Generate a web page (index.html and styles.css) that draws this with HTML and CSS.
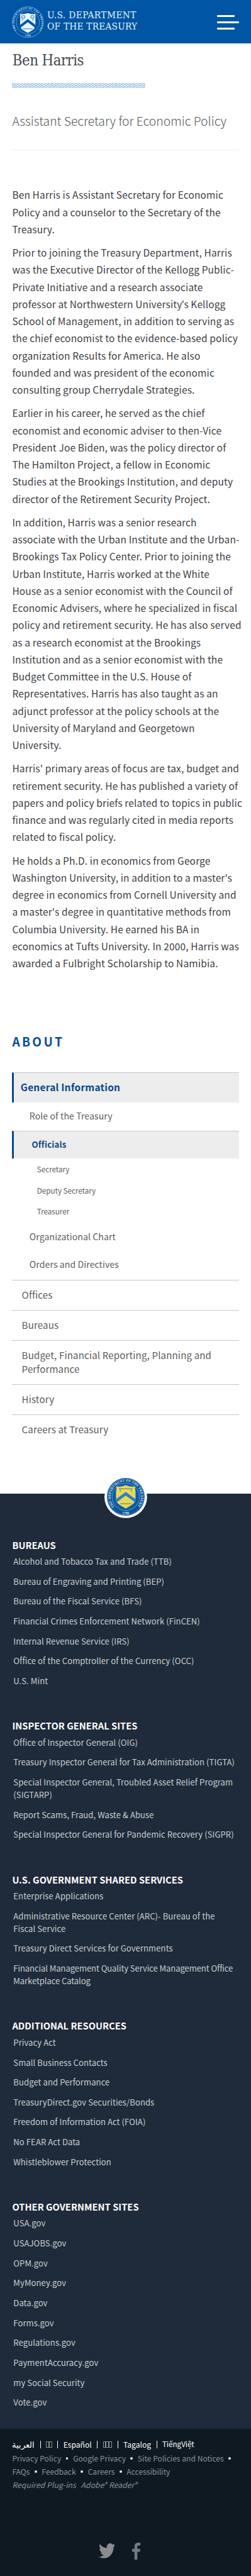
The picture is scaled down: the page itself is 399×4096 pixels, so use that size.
FILE: index.html
```html
<!DOCTYPE html>
<html lang="en">
<head>
<meta charset="utf-8">
<title>Ben Harris | U.S. Department of the Treasury</title>
<link rel="stylesheet" href="styles.css">
</head>
<body>
<header class="site-header">
  <div class="brand">
    <svg class="brand-seal" viewBox="0 0 52 52" fill="none">
      <defs><path id="ring" d="M7.4 38.5A22.3 22.3 0 1 1 44.6 38.5" transform="translate(0 .8)"/></defs>
      <circle cx="26" cy="26" r="25.2" stroke="#9cc8ee" stroke-width=".7"/>
      <circle cx="26" cy="26" r="19" stroke="#9cc8ee" stroke-width=".6"/>
      <text class="ring-text" fill="#d9edfb"><textPath href="#ring" textLength="96">THE DEPARTMENT OF THE TREASURY</textPath></text>
      <text class="ring-year" x="26" y="49.6" text-anchor="middle" fill="#d9edfb">1789</text>
      <path d="M13.5 12.5q6 1 12.5-1.500q6.500 2.500 12.500 1.500v18c0 7-5 9-12.500 13c-7.500-4-12.500-6-12.500-13z" fill="#e6f5fc"/>
      <path d="M13.500 30.500L26 21l12.500 9.500v5L26 26l-12.500 9.500z" fill="#0056a6"/>
      <path d="M16 15.500h5v4h-5zm15 0h5v4h-5zM17.500 20v4m17-4v4M18 37h16" stroke="#0056a6" stroke-width=".8"/>
    </svg>
    <div class="brand-name">
      <span class="brand-l1">U.S. DEPARTMENT</span>
      <span class="brand-l2">OF THE TREASURY</span>
    </div>
  </div>
  <div class="menu"><span></span><span class="menu-long"></span><span></span></div>
</header>

<main class="profile">
  <h1 class="name"><span>Ben Harris</span></h1>
  <div class="stripes"></div>
  <h2 class="role"><span>Assistant Secretary for Economic Policy</span></h2>
  <div class="bio">
    <p>Ben Harris is Assistant Secretary for Economic<br>Policy and a counselor to the Secretary of the<br>Treasury.</p>
    <p>Prior to joining the Treasury Department, Harris<br>was the Executive Director of the Kellogg Public-<br>Private Initiative and a research associate<br>professor at Northwestern University<span class="apos">’</span>s Kellogg<br>School of Management, in addition to serving as<br>the chief economist to the evidence-based policy<br>organization Results for America. He also<br>founded and was president of the economic<br>consulting group Cherrydale Strategies.</p>
    <p>Earlier in his career, he served as the chief<br>economist and economic adviser to then-Vice<br>President Joe Biden, was the policy director of<br>The Hamilton Project, a fellow in Economic<br>Studies at the Brookings Institution, and deputy<br>director of the Retirement Security Project.</p>
    <p>In addition, Harris was a senior research<br>associate with the Urban Institute and the Urban-<br>Brookings Tax Policy Center. Prior to joining the<br>Urban Institute, Harris worked at the White<br>House as a senior economist with the Council of<br>Economic Advisers, where he specialized in fiscal<br>policy and retirement security. He has also served<br>as a research economist at the Brookings<br>Institution and as a senior economist with the<br>Budget Committee in the U.S. House of<br>Representatives. Harris has also taught as an<br>adjunct professor at the policy schools at the<br>University of Maryland and Georgetown<br>University.</p>
    <p>Harris' primary areas of focus are tax, budget and<br>retirement security. He has published a variety of<br>papers and policy briefs related to topics in public<br>finance and was regularly cited in media reports<br>related to fiscal policy.</p>
    <p>He holds a Ph.D. in economics from George<br>Washington University, in addition to a master's<br>degree in economics from Cornell University and<br>a master's degree in quantitative methods from<br>Columbia University. He earned his BA in<br>economics at Tufts University. In 2000, Harris was<br>awarded a Fulbright Scholarship to Namibia.</p>
  </div>
</main>

<nav class="about">
  <h2 class="about-title">ABOUT</h2>
  <ul class="tree">
    <li class="top active"><span>General Information</span></li>
    <li class="sub first"><span>Role of the Treasury</span></li>
    <li class="sub active officials"><span>Officials</span></li>
    <li class="leaf"><span>Secretary</span></li>
    <li class="leaf"><span>Deputy Secretary</span></li>
    <li class="leaf"><span>Treasurer</span></li>
    <li class="sub"><span>Organizational Chart</span></li>
    <li class="sub last"><span>Orders and Directives</span></li>
    <li class="top"><span>Offices</span></li>
    <li class="top"><span>Bureaus</span></li>
    <li class="top"><span>Budget, Financial Reporting, Planning and<br>Performance</span></li>
    <li class="top"><span>History</span></li>
    <li class="top"><span>Careers at Treasury</span></li>
  </ul>
</nav>

<footer class="site-footer">
  <svg class="footer-seal" viewBox="0 0 70 70" fill="none">
    <defs><path id="ring2" d="M16.500 51.500A24.800 24.800 0 1 1 53.500 51.500"/></defs>
    <circle cx="35" cy="35" r="35" fill="#fff"/>
    <circle cx="35" cy="35" r="31" fill="#0f5596"/>
    <circle cx="35" cy="35" r="29.800" stroke="#8fbbe0" stroke-width=".5"/>
    <circle cx="35" cy="35" r="22.500" fill="#0b5ca8" stroke="#8fbbe0" stroke-width=".7"/>
    <text class="ring-text big" fill="#d5e8f5"><textPath href="#ring2" textLength="112">THE DEPARTMENT OF THE TREASURY</textPath></text>
    <text class="ring-year big" x="35" y="63.500" text-anchor="middle" fill="#d5e8f5">1789</text>
    <path d="M19.500 18q8 1.500 15.500-2q7.500 3.500 15.500 2q-1 4 .5 8v11c0 10-7 12-16 17.500c-9-5.500-16-7.500-16-17.500v-11q1.500-4 .5-8z" fill="#e8d85c"/>
    <path d="M19 39L35 27l16 12v6L35 33 19 45z" fill="#2f7fc4"/>
    <path d="M24 22h22M26 22v5m18-5v5M26 46.500h18" stroke="#7f9a70" stroke-width="1.500"/>
  </svg>
  <section><h3>BUREAUS</h3><ul><li>Alcohol and Tobacco Tax and Trade (TTB)</li><li>Bureau of Engraving and Printing (BEP)</li><li>Bureau of the Fiscal Service (BFS)</li><li>Financial Crimes Enforcement Network (FinCEN)</li><li>Internal Revenue Service (IRS)</li><li>Office of the Comptroller of the Currency (OCC)</li><li>U.S. Mint</li></ul></section>
  <section><h3>INSPECTOR GENERAL SITES</h3><ul><li>Office of Inspector General (OIG)</li><li>Treasury Inspector General for Tax Administration (TIGTA)</li><li>Special Inspector General, Troubled Asset Relief Program<br>(SIGTARP)</li><li>Report Scams, Fraud, Waste &amp; Abuse</li><li>Special Inspector General for Pandemic Recovery (SIGPR)</li></ul></section>
  <section><h3>U.S. GOVERNMENT SHARED SERVICES</h3><ul><li>Enterprise Applications</li><li>Administrative Resource Center (ARC)- Bureau of the<br>Fiscal Service</li><li>Treasury Direct Services for Governments</li><li class="tight">Financial Management Quality Service Management Office<br>Marketplace Catalog</li></ul></section>
  <section><h3>ADDITIONAL RESOURCES</h3><ul><li>Privacy Act</li><li>Small Business Contacts</li><li>Budget and Performance</li><li>TreasuryDirect.gov Securities/Bonds</li><li>Freedom of Information Act (FOIA)</li><li>No FEAR Act Data</li><li>Whistleblower Protection</li></ul></section>
  <section><h3>OTHER GOVERNMENT SITES</h3><ul><li>USA.gov</li><li>USAJOBS.gov</li><li>OPM.gov</li><li>MyMoney.gov</li><li>Data.gov</li><li>Forms.gov</li><li>Regulations.gov</li><li>PaymentAccuracy.gov</li><li>my Social Security</li><li>Vote.gov</li></ul></section>
</footer>

<div class="legal">
  <div class="langs"><span class="arabic">العربية</span><i></i><span class="boxes"><b></b><b></b></span><i></i><span>Español</span><i></i><span class="boxes"><b></b><b></b><b></b></span><i></i><span>Tagalog</span><i></i><span class="viet">TiếngViệt</span></div>
  <div class="links"><span>Privacy Policy</span><em></em><span>Google Privacy</span><em></em><span>Site Policies and Notices</span><em></em></div>
  <div class="links"><span>FAQs</span><em></em><span>Feedback</span><em></em><span>Careers</span><em></em><span>Accessibility</span></div>
  <div class="plugins"><span>Required Plug-ins</span><span>Adobe<sup>®</sup> Reader<sup>®</sup></span></div>
  <div class="social">
    <svg class="tw" viewBox="0 0 24 20" preserveAspectRatio="none"><path fill="#8c8c8c" d="M24 2.400a9.800 9.800 0 0 1-2.800.8A4.900 4.900 0 0 0 23.300.500a9.900 9.900 0 0 1-3.100 1.200 4.900 4.900 0 0 0-8.400 4.500A14 14 0 0 1 1.700 1a4.900 4.900 0 0 0 1.500 6.600 4.900 4.900 0 0 1-2.200-.6v.1a4.900 4.900 0 0 0 3.900 4.800 4.900 4.900 0 0 1-2.200.1 4.900 4.900 0 0 0 4.600 3.400A9.900 9.900 0 0 1 0 17.500a14 14 0 0 0 7.500 2.200c9.100 0 14.300-7.700 14-14.600A10 10 0 0 0 24 2.400z"/></svg>
    <svg class="fb" viewBox="0 0 14 28"><path fill="#717b81" d="M13.600.2v4.400H11c-2 0-2.400 1-2.400 2.400v3.100h4.900l-.6 4.900H8.600V28H3.900V15H0v-4.900h3.900V6.400C3.900 2.300 6.400 0 10.100 0c1.700 0 3.200.1 3.500.2z"/></svg>
  </div>
</div>
</body>
</html>
```

FILE: styles.css
```css
* { box-sizing: border-box; margin: 0; padding: 0; }
html { background: #fff; }
body {
  zoom: 0.9695;
  font-family: "Noto Sans CJK SC", "Noto Sans", sans-serif;
  color: #3f4245;
  white-space: nowrap;
  overflow-x: hidden;
}
ul { list-style: none; }

.site-header {
  height: 71px;
  background: #0055a4;
  display: flex;
  justify-content: space-between;
  padding: 10px 20px 0;
}
.brand { display: flex; gap: 5.500px; }
.brand-seal { width: 52px; height: 52px; }
.ring-text { font: bold 4.200px "Liberation Serif", serif; }
.ring-text.big { font-size: 5.600px; }
.ring-year { font: bold 4.500px "Liberation Serif", serif; }
.ring-year.big { font-size: 5.500px; }
.brand-name {
  display: flex;
  flex-direction: column;
  padding-top: 7px;
  font: 15.800px/18.400px "DejaVu Serif Condensed", "DejaVu Serif", serif;
  color: #e4f6fd;
}
.brand-l1 { letter-spacing: .42px; }
.brand-l2 { letter-spacing: .2px; }
.menu { width: 36px; display: flex; flex-direction: column; gap: 7px; padding-top: 15px; }
.menu span { width: 29px; height: 3px; border-radius: 1px; background: #fff; }
.menu .menu-long { width: 36px; }

.profile { padding: 0 20px; }
.name {
  padding: 11.700px 0 0 .5px;
  height: 65px;
  font: 300 24.500px/34px "DejaVu Serif Condensed", "DejaVu Serif", serif;
  color: #46484a;
  letter-spacing: -.55px;
}
.stripes {
  width: 218px;
  height: 8px;
  background: repeating-linear-gradient(147deg, #a3c5df 0 1.300px, #e0edf7 1.300px 3px);
}
.role {
  height: 103px;
  padding-top: 34.600px;
  border-bottom: 2px solid #eee;
  font-size: 20px;
  line-height: 40px;
  font-weight: 300;
  color: #55585b;
}
.bio {
  padding-top: 58.700px;
  font-size: 16px;
  line-height: 28.120px;
  letter-spacing: .14px;
}
.bio p { padding-bottom: 10.200px; }
.apos { font-family: "Noto Sans", sans-serif; line-height: 1; }

.about { padding: 83.900px 20px 0; height: 845.800px; }
.about-title {
  height: 71px;
  line-height: 40px;
  font-size: 19.800px;
  letter-spacing: 3.400px;
  color: #0b4a8f;
}
.tree li { color: #5c5e60; }
.top {
  border-top: 1px solid #c4c6c8;
  padding: 11.400px 0 13.900px 15.700px;
  font-size: 15.600px;
  line-height: 23px;
  letter-spacing: .13px;
}
.top.active {
  border-left: 4px solid #0d4a86;
  padding: 10.800px 0 14.200px 10.800px;
  font-size: 16px;
  letter-spacing: .2px;
}
.tree .active { background: #ededee; color: #0b4787; font-weight: 700; }
.sub { padding: 11.500px 0 11.500px 28.300px; font-size: 14.500px; line-height: 23px; letter-spacing: .1px; }
.sub.first { padding-top: 10.200px; padding-bottom: 13.100px; }
.sub.last { padding-bottom: 14.100px; }
.sub.officials {
  border-top: 1px solid #c4c6c8;
  border-left: 4px solid #0d4a86;
  padding: 10.300px 0 11.100px 29px;
  font-size: 13.500px;
  letter-spacing: .23px;
}
.leaf { padding: 5.900px 0 6.100px 40.700px; font-size: 12px; line-height: 23px; }

.site-footer {
  position: relative;
  height: 1533px;
  background: #1f2a3a;
  padding: 72.700px 20px 0;
  color: #c9ced4;
}
.footer-seal { position: absolute; width: 70px; height: 70px; left: 171px; top: -30px; }
.site-footer section { padding-bottom: 39.800px; }
.site-footer h3 { font-size: 15.200px; line-height: 22px; height: 28.300px; color: #fff; font-weight: 700; }
.site-footer li {
  padding: 0 0 11.970px 2px;
  font-size: 13.500px;
  line-height: 20.700px;
  letter-spacing: .07px;
}
.site-footer .tight { letter-spacing: -.1px; }

.legal {
  height: 242px;
  background: #0e1921;
  padding: 15.200px 20px 0;
  font-size: 12.500px;
  line-height: 22px;
  color: #8b9398;
}
.legal > div { display: flex; align-items: center; height: 22px; }
.langs { color: #fff; }
.arabic { font-size: 13.900px; }
.viet { font-size: 12px; }
.langs i { width: 1px; height: 13px; background: #fff; margin: 0 8.700px; }
.boxes { display: flex; }
.boxes b { width: 5px; height: 10px; border: 1px solid #8a9094; }
.links em { width: 4px; height: 4px; border-radius: 50%; background: #e6eaec; margin: 1px 8px 0 7.500px; }
.plugins { font-style: italic; gap: 8px; letter-spacing: .1px; }
.plugins sup { font-size: 10px; line-height: 0; vertical-align: 2px; }
.legal > .social { height: 28px; margin-top: 83.800px; padding-left: 141.500px; gap: 28.500px; }
.tw { width: 27px; height: 25px; }
.fb { width: 14px; height: 28px; }
```
